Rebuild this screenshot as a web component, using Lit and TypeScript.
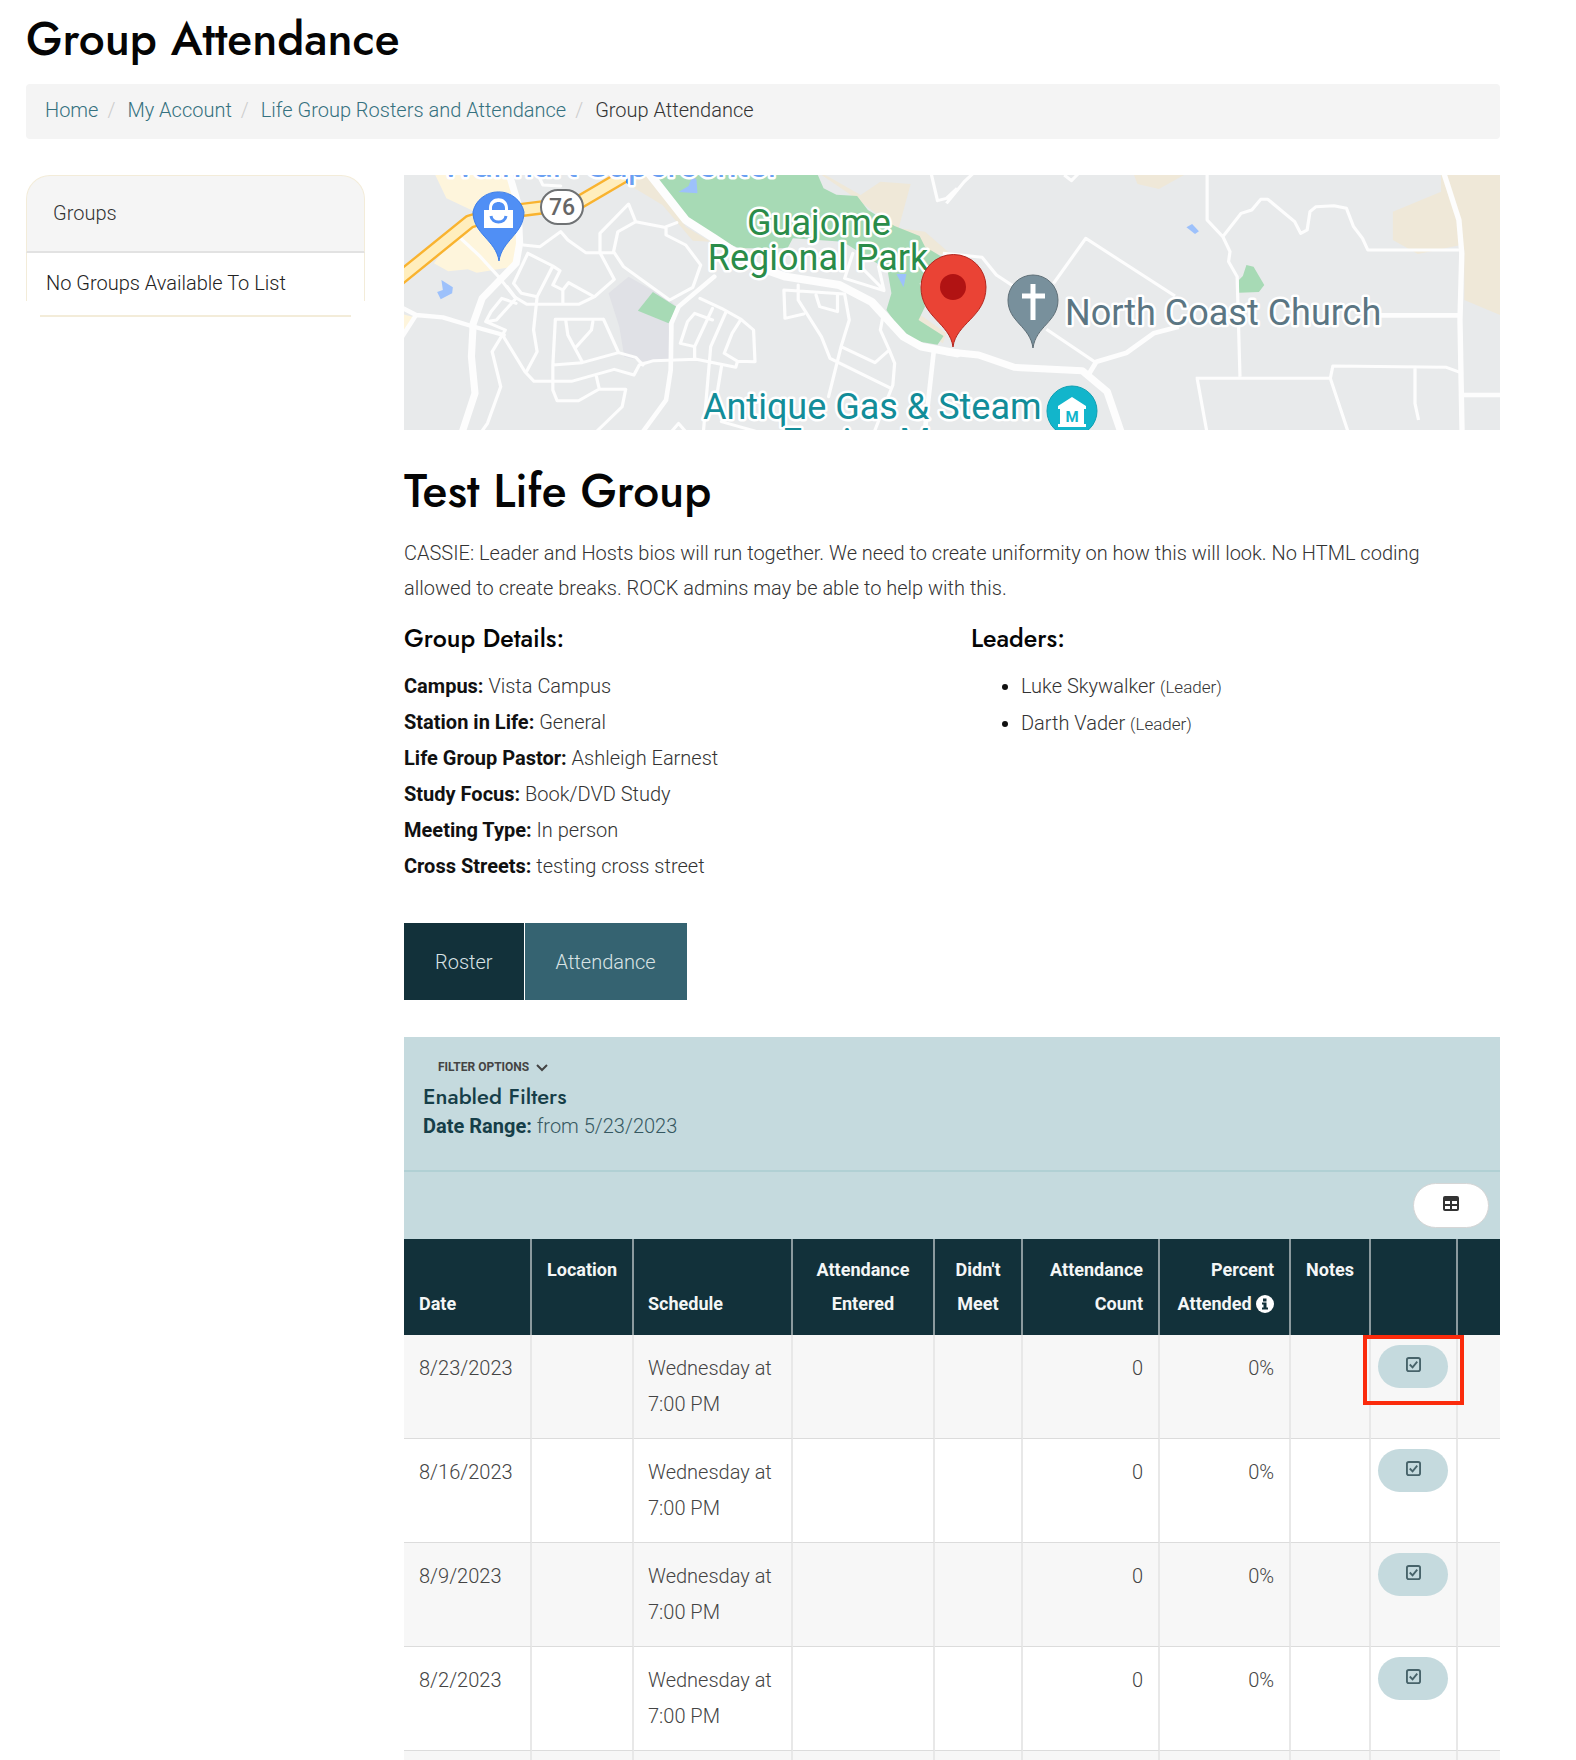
import { LitElement, html, svg, css } from "lit";
import { customElement, property } from "lit/decorators.js";

const details = [
  ["Campus:", "Vista Campus"],
  ["Station in Life:", "General"],
  ["Life Group Pastor:", "Ashleigh Earnest"],
  ["Study Focus:", "Book/DVD Study"],
  ["Meeting Type:", "In person"],
  ["Cross Streets:", "testing cross street"],
];
const leaders = ["Luke Skywalker", "Darth Vader"];
const dates = ["8/23/2023", "8/16/2023", "8/9/2023", "8/2/2023", "7/26/2023"];

const westMap = svg`
  <g transform="translate(-4 -5) scale(0.35714 0.33333)">
    <g fill="#fef5dc">
      <path d="M92 0H310L335 130L320 290L215 308L190 298L135 304L95 280L150 200L210 125L130 85Z" />
      <path d="M0 430L35 440L15 480H0Z" />
    </g>
    <path fill="#e0e1e6" d="M584 370L640 320L755 390L776 412L752 460L756 570L680 574L628 560L614 470Z" />
    <g fill="#efe8d8">
      <path d="M640 0H700L800 170L870 215L820 212L735 105L650 50Z" />
      <path d="M1160 0L1200 20L1290 75L1345 35L1430 42L1396 175L1470 185L1545 255L1480 250L1370 160L1270 80Z" />
      <path d="M1450 430L1530 490L1520 520L1440 460Z" />
    </g>
    <g fill="#a7dab5">
      <path d="M700 0H1164L1186 55L1222 74L1280 78L1310 120L1385 168L1455 198L1470 230L1540 275L1455 340L1470 410L1452 450L1522 498L1505 524L1440 512L1395 470L1362 420L1376 370L1365 300L1240 215L1100 205L1085 235H950L880 205L800 150Z" />
      <path d="M708 366L776 412L752 460L666 422Z" />
    </g>
    <g fill="#9dc1fb">
      <path d="M818 20L830 28L833 70L780 66L808 48Z" />
      <path d="M1390 312H1418L1410 352Z" />
      <path d="M116 330L148 352L146 370L114 388L104 366L120 360Z" />
    </g>
    <g fill="none" stroke="#fdfdfd" stroke-linejoin="round" stroke-linecap="round">
      <g stroke-width="9">
        <path d="M170 205L225 260L280 325L320 380L355 403H500L545 380L600 328L560 248L520 248L470 210L450 185L392 230L345 225" />
        <path d="M358 250L318 340L340 370L384 380L374 480L384 545L355 603M384 380L428 288L448 302L428 345L456 360V400M456 360L472 338L540 378M358 250L428 288" />
        <path d="M560 248V190L640 102L660 155L740 172L775 158M660 155L610 185L598 245L626 290L755 390L820 352L842 285L800 225L745 195V172M560 248H598M840 385L900 415L955 448L990 480L994 575L945 574L940 592L830 568L710 572L670 585L655 615L600 598L480 634H375L350 605L290 500M875 415L825 530V568M875 450L825 430L805 455L785 520L825 530M912 428L870 530L850 780M955 448L930 490L908 550L945 574M900 590L888 670" />
        <path d="M300 350L325 385L270 450L240 455L295 480L258 545L282 650L245 760L225 790M325 400L285 385L255 425L240 455" />
        <path d="M570 448H435L428 585V660L440 692H500L558 657L632 658L622 710L550 785M550 620L558 657M428 585L510 578L612 548L660 562L680 585M570 448L612 548M464 450L470 495L510 575M540 455L536 480L490 535M380 0L400 45L450 48" />
        <path d="M1075 360L1245 372L1258 450L1235 530L1200 680M1075 360L1078 445L1130 432M1115 345V390L1180 500L1204 565L1375 655M1235 530L1330 578L1370 540L1345 480L1352 440M1370 540L1385 580L1380 645L1330 780M1165 375L1175 410L1225 425V375M1245 325L1268 250M1290 290L1355 360L1340 290M1245 325L1355 362M760 785L780 760L800 785M900 755L1000 785" />
      </g>
      <path stroke-width="20" d="M305 10L330 100L335 220L325 280L230 385L205 460L200 560L210 670L170 800" />
      <path stroke-width="13" d="M0 410L45 435L120 442L200 468L290 495M45 435L0 510M880 320L780 410L760 460L758 600L745 690L670 800M1495 540L1470 780" />
      <path stroke-width="24" d="M690 0L800 150L880 205L1000 290L1080 320L1230 345L1320 395L1410 500L1460 530L1560 550" />
    </g>
    <g fill="none" stroke-linejoin="round">
      <path stroke="#f9b32f" stroke-width="43" d="M-30 350L195 155L280 128L400 112L500 98L680 -15" />
      <path stroke="#ffeebd" stroke-width="29" d="M-30 350L195 155L280 128L400 112L500 98L680 -15" />
    </g>
    <path fill="#2f7bf4" d="M633 0H646V38L640 44L633 38Z" />
  </g>`;

const eastMap = svg`
  <g transform="translate(546 -5) scale(0.35714 0.33333)">
    <g fill="#efe8d8">
      <path d="M510 0H680L585 57L525 42Z" />
      <path d="M1375 0H1545V437L1440 390V240L1430 225L1310 252L1240 210V125L1375 65Z" />
    </g>
    <path fill="#a7dab5" d="M830 285L850 290L880 345L865 366L809 368V330L820 318Z" />
    <path fill="#9dc1fb" d="M678 162L697 184L686 192L662 172Z" />
    <g fill="none" stroke="#fdfdfd" stroke-linejoin="round">
      <path stroke-width="9" d="M-20 250L90 262L130 315L180 350M290 340L380 205L630 378M270 478L405 575M720 0V150L764 200L784 245L780 275L804 320L812 620M764 200L815 130L845 120L870 88H890L965 155L982 190L1000 180L1008 125L1025 110L1075 107L1110 115L1130 170L1155 205L1170 240H1425M688 625H1065L1072 588L1390 592L1430 608M692 625L720 790M1065 625L1116 790M1302 590V700L1312 750M-10 100L40 35L75 0M320 15L340 32L360 10M-55 0L-35 92L-10 85L20 55" />
      <path stroke-width="14" d="M1200 436H1430M1430 675H1550M390 610L410 575L495 548L570 490L640 470" />
      <path stroke-width="21" d="M-10 545L80 555L180 592L370 602L440 665L480 790" />
      <path stroke-width="15" d="M1380 0L1425 150L1433 250L1428 450L1434 800" />
    </g>
  </g>`;

@customElement("group-map")
export class GroupMap extends LitElement {
  static styles = css`
    :host { display: block; }
    .map { display: block; width: 100%; height: 255px; background: #e8eaeb; }
    .label {
      font-family: Roboto, "Liberation Sans", sans-serif;
      font-size: 36px;
      font-weight: 400;
      paint-order: stroke;
      stroke: #fff;
      stroke-width: 5px;
      stroke-linejoin: round;
    }
    .park { fill: #2a8c49; }
    .church { fill: #5b7683; }
    .museum { fill: #128d99; }
    .shop { fill: #6a9ff2; }
    .route { font: 500 23px Roboto, "Liberation Sans", sans-serif; fill: #666; }
    .badge { font: 700 15px Roboto, "Liberation Sans", sans-serif; fill: #12b5cb; }
  `;

  render() {
    return html`
      <svg class="map" viewBox="0 0 1096 255" preserveAspectRatio="xMidYMid slice" role="img" aria-label="Map of the group's meeting place">
        ${westMap}${eastMap}
        <text class="label shop" x="38" y="2">Walmart Supercenter</text>
        <rect x="137" y="15" width="42" height="34" rx="17" fill="#fff" stroke="#6f7274" stroke-width="2" />
        <text class="route" x="158" y="40" text-anchor="middle">76</text>
        <path fill="#508ff5" stroke="#3b7de8" d="M95 86C92 65 69 59 69 37a26 25 0 0 1 51 0C120 59 98 65 95 86Z" />
        <path fill="#fff" fill-rule="evenodd" d="M80 35h5v-2c0-13 19-13 19 0v2h5v18H80ZM88 35h13v-2c0-8-13-8-13 0Z" />
        <path fill="none" stroke="#508ff5" stroke-width="3" d="M87 41c1 8 14 8 15 0" />
        <text class="label park" x="415" y="60" text-anchor="middle">Guajome</text>
        <text class="label park" x="414" y="95" text-anchor="middle">Regional Park</text>
        <path fill="#ea4335" stroke="#b3261e" d="M549 172C546 148 517 142 517 112a32 32 0 0 1 65 0C582 142 552 148 549 172Z" />
        <circle cx="549" cy="112" r="13" fill="#b11313" />
        <path fill="#78909c" stroke="#5f6f77" d="M629 173C626 151 604 147 604 125a25 25 0 0 1 50 0C654 147 632 151 629 173Z" />
        <path fill="none" stroke="#fff" stroke-width="5" d="M629 109V145M618 121H641" />
        <text class="label church" x="661" y="150">North Coast Church</text>
        <text class="label museum" x="299" y="244">Antique Gas &amp; Steam</text>
        <text class="label museum" x="378" y="279">Engine Museum</text>
        <circle cx="668" cy="236" r="25" fill="#12b5cb" stroke="#0e9fb2" />
        <path fill="#fff" d="M668 222l14 9v3h-28v-3ZM656 234h24v15h-24ZM654 249h28v3h-28Z" />
        <text class="badge" x="668" y="247" text-anchor="middle">M</text>
      </svg>
    `;
  }
}

@customElement("attendance-table")
export class AttendanceTable extends LitElement {
  @property({ attribute: false }) rows: string[] = [];

  static styles = css`
    :host { display: block; }
    .grid { width: 100%; table-layout: fixed; border-collapse: separate; border-spacing: 0; }
    .c-date { width: 128px; }
    .c-location { width: 102px; }
    .c-schedule { width: 159px; }
    .c-entered { width: 142px; }
    .c-meet { width: 88px; }
    .c-count { width: 137px; }
    .c-percent { width: 131px; }
    .c-notes { width: 80px; }
    .c-action { width: 87px; }
    .c-end { width: 42px; }
    th {
      padding: 14px;
      background: #12313a;
      color: #f4f6f6;
      font-size: 18px;
      line-height: 34px;
      font-weight: 700;
      text-align: center;
      vertical-align: top;
      border-right: 2px solid #8b9a9e;
    }
    th.start { text-align: left; vertical-align: bottom; }
    th.end, td.end { text-align: right; padding-right: 15px; }
    td {
      padding: 15px 14px 16px;
      vertical-align: top;
      line-height: 36px;
      color: #444;
      border-right: 2px solid #e8e8e8;
      border-bottom: 1px solid #dcdcdc;
    }
    th:first-child, td:first-child { padding-left: 15px; }
    th:last-child, td:last-child { border-right: 0; }
    tr:nth-child(odd) td { background: #f7f7f7; }
    td.action { position: relative; padding: 10px 7px; }
    .check {
      display: flex;
      align-items: center;
      justify-content: center;
      width: 70px;
      height: 43px;
      padding: 0 0 5px;
      border: 0;
      border-radius: 22px;
      background: #c5dade;
      color: #47636a;
    }
    .highlight {
      position: absolute;
      z-index: 1;
      inset: 0 -8px auto -8px;
      height: 62px;
      border: 4px solid #fb2b0c;
      pointer-events: none;
    }
    .info { width: 18px; height: 18px; vertical-align: -3px; }
  `;

  render() {
    return html`
      <table class="grid">
        <colgroup>
          <col class="c-date" /><col class="c-location" /><col class="c-schedule" /><col class="c-entered" /><col class="c-meet" />
          <col class="c-count" /><col class="c-percent" /><col class="c-notes" /><col class="c-action" /><col class="c-end" />
        </colgroup>
        <thead>
          <tr>
            <th class="start">Date</th>
            <th>Location</th>
            <th class="start">Schedule</th>
            <th>Attendance Entered</th>
            <th>Didn't Meet</th>
            <th class="end">Attendance Count</th>
            <th class="end">Percent Attended
              <svg class="info" viewBox="0 0 18 18" aria-hidden="true"><circle cx="9" cy="9" r="9" fill="#fff" /><path fill="#12313a" d="M7 3.500h3.500v3H7ZM6 7.500h4.500v5H12v2H6v-2h1.500v-3H6Z" /></svg></th>
            <th>Notes</th>
            <th></th>
            <th></th>
          </tr>
        </thead>
        <tbody>
          ${this.rows.map(
            (date, i) => html`
              <tr>
                <td>${date}</td>
                <td></td>
                <td>Wednesday at 7:00 PM</td>
                <td></td>
                <td></td>
                <td class="end">0</td>
                <td class="end">0%</td>
                <td></td>
                <td class="action">
                  <button class="check" type="button" aria-label="Enter attendance for ${date}">
                    <svg width="15" height="15" viewBox="0 0 16 16" fill="none" stroke="currentColor" stroke-width="2"><rect x="1" y="1" width="14" height="14" rx="2" /><path d="M4 8l3 3 5-6" /></svg>
                  </button>
                  ${i === 0 ? html`<div class="highlight"></div>` : ""}
                </td>
                <td></td>
              </tr>
            `
          )}
        </tbody>
      </table>
    `;
  }
}

@customElement("app-root")
export class AppRoot extends LitElement {
  static styles = css`
    :host {
      display: block;
      box-sizing: border-box;
      height: 100vh;
      overflow: hidden;
      padding: 0 76px 0 26px;
      background: #fff;
      color: #333;
      font: 300 20px/36px Roboto, "Liberation Sans", sans-serif;
    }
    * { box-sizing: border-box; }
    h1, h2, h3, h4 { margin: 0; font-family: Jost, Lato, sans-serif; font-weight: 500; color: #050505; }
    h1, h2 { font-size: 46px; line-height: 52px; }
    h1 { padding: 13px 0 19px; }
    h3 { font-size: 25px; line-height: 36px; }
    h4 { font-size: 22px; line-height: 30px; color: #163e48; }
    b { font-weight: 700; color: #111; }
    .crumbs {
      display: flex;
      height: 55px;
      margin-bottom: 36px;
      padding: 0 19px 4px;
      align-items: center;
      background: #f4f4f4;
      border-radius: 4px;
    }
    .crumbs a { color: #35717f; text-decoration: none; }
    .crumbs a::after { content: "/"; padding: 0 12px 0 9px; color: #ccc; }
    .columns { display: grid; grid-template-columns: 23% minmax(0, 1fr); gap: 39px; align-items: start; }
    .card-head {
      height: 78px;
      padding: 19px 26px;
      background: #f5f5f5;
      border: 1px solid #f3ecd9;
      border-bottom: 2px solid #e2e2e2;
      border-radius: 24px 24px 0 0;
    }
    .card-body { padding: 12px 19px 0; border: solid #f3ecd9; border-width: 0 1px; color: #222; }
    .card-foot { height: 16px; margin: 0 14px; border-bottom: 2px solid #f3ecd9; }
    .title { padding-top: 35px; }
    .about { margin: 19px 0 14px; padding-right: 40px; line-height: 35px; }
    .facts { display: grid; grid-template-columns: 1fr 1fr; gap: 38px; }
    .lines, .leaders { margin: 12px 0 0; list-style: none; padding: 0; }
    .leaders { list-style: disc; padding-left: 50px; }
    .leaders li::marker { color: #111; }
    small { font-size: 17px; }
    .tabs { display: flex; gap: 1px; margin: 39px 0 37px; }
    .tab {
      padding: 21px 31px 20px;
      background: #12313a;
      color: #d9e3e5;
      text-decoration: none;
    }
    .tab.active { background: #356371; }
    .filters { height: 135px; padding: 17px 19px; background: #c5dade; border-bottom: 2px solid #b1d0d4; }
    .filter-toggle {
      display: flex;
      align-items: center;
      gap: 7px;
      padding: 0 15px;
      border: 0;
      background: none;
      color: #444;
      font: 700 12px/27px Roboto, "Liberation Sans", sans-serif;
    }
    .range { margin: 0; line-height: 30px; color: #365861; }
    .range b { color: #163e48; }
    .tools { display: flex; justify-content: flex-end; padding: 11px; background: #c5dade; }
    .export {
      display: flex;
      width: 76px;
      height: 45px;
      padding: 0 0 4px;
      align-items: center;
      justify-content: center;
      border: 1px solid #d6d6d6;
      border-radius: 23px;
      background: #fff;
      color: #333;
    }
  `;

  render() {
    return html`
      <h1>Group Attendance</h1>
      <nav class="crumbs" aria-label="Breadcrumb">
        <a href="#home">Home</a><a href="#account">My Account</a><a href="#rosters">Life Group Rosters and Attendance</a><span>Group Attendance</span>
      </nav>
      <div class="columns">
        <aside>
          <div class="card-head">Groups</div>
          <div class="card-body">No Groups Available To List</div>
          <div class="card-foot"></div>
        </aside>
        <main>
          <group-map></group-map>
          <h2 class="title">Test Life Group</h2>
          <p class="about">CASSIE: Leader and Hosts bios will run together. We need to create uniformity on how this will look. No HTML coding allowed to create breaks. ROCK admins may be able to help with this.</p>
          <div class="facts">
            <section>
              <h3>Group Details:</h3>
              <ul class="lines">${details.map(([name, value]) => html`<li><b>${name}</b> ${value}</li>`)}</ul>
            </section>
            <section>
              <h3>Leaders:</h3>
              <ul class="leaders">${leaders.map((name) => html`<li>${name} <small>(Leader)</small></li>`)}</ul>
            </section>
          </div>
          <nav class="tabs" aria-label="Group pages">
            <a class="tab" href="#roster">Roster</a>
            <a class="tab active" href="#attendance">Attendance</a>
          </nav>
          <section class="filters">
            <button class="filter-toggle" type="button">FILTER OPTIONS
              <svg width="12" height="8" viewBox="0 0 12 8" fill="none" stroke="currentColor" stroke-width="2"><path d="M1 1l5 5 5-5" /></svg>
            </button>
            <h4>Enabled Filters</h4>
            <p class="range"><b>Date Range:</b> from 5/23/2023</p>
          </section>
          <div class="tools">
            <button class="export" type="button" aria-label="Export to table">
              <svg width="16" height="16" viewBox="0 0 16 16"><path fill="currentColor" fill-rule="evenodd" d="M2 0H14Q16 0 16 2V13Q16 15 14 15H2Q0 15 0 13V2Q0 0 2 0ZM2 5V8H7V5ZM9 5V8H14V5ZM2 10V13H7V10ZM9 10V13H14V10Z" /></svg>
            </button>
          </div>
          <attendance-table .rows=${dates}></attendance-table>
        </main>
      </div>
    `;
  }
}
